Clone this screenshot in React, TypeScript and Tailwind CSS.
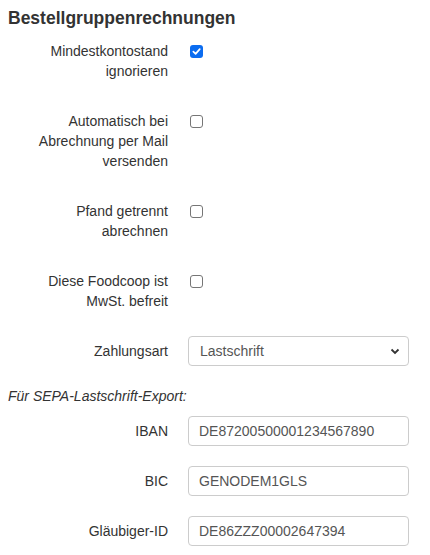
export default function App() {
  const checks = [
    { label: ['Mindestkontostand', 'ignorieren'], checked: true },
    { label: ['Automatisch bei', 'Abrechnung per Mail', 'versenden'], checked: false },
    { label: ['Pfand getrennt', 'abrechnen'], checked: false },
    { label: ['Diese Foodcoop ist', 'MwSt. befreit'], checked: false },
  ];
  const fields = [
    { label: 'IBAN', value: 'DE87200500001234567890' },
    { label: 'BIC', value: 'GENODEM1GLS' },
    { label: 'Gläubiger-ID', value: 'DE86ZZZ00002647394' },
  ];

  return (
    <div className="w-[430px] h-[555px] bg-white text-[#333] font-['Liberation_Sans',Arial,sans-serif] text-[14px] leading-[20px] overflow-hidden">
      <h2 className="pl-2 pt-[7px] text-[17.5px] leading-[22px] font-bold text-[#333]">
        Bestellgruppenrechnungen
      </h2>
      <div className="mt-[12px] flex flex-col">
        {checks.map((c, i) => (
          <div key={i} className="flex items-start mb-[30px]">
            <div className="w-[168px] text-right">
              {c.label.map((l) => (
                <div key={l}>{l}</div>
              ))}
            </div>
            <div className="ml-[22px] pt-[4px]">
              {c.checked ? (
                <span className="flex w-[13px] h-[13px] rounded-[3px] bg-[#0b6cf0] items-center justify-center">
                  <svg width="9" height="9" viewBox="0 0 10 10">
                    <path d="M1.5 5.2 L4 7.6 L8.6 2.4" stroke="white" strokeWidth="1.9" fill="none" strokeLinecap="round" strokeLinejoin="round" />
                  </svg>
                </span>
              ) : (
                <span className="block w-[13px] h-[13px] rounded-[3px] border border-[#767676] bg-white" />
              )}
            </div>
          </div>
        ))}
        <div className="flex items-center -mt-[5px]">
          <div className="w-[168px] text-right">Zahlungsart</div>
          <div className="ml-[20px] w-[221px] h-[30px] rounded-[4px] border border-[#ccc] bg-white flex items-center justify-between pl-[11px] pr-[8px]">
            <span className="text-[#555]">Lastschrift</span>
            <svg width="10" height="7" viewBox="0 0 10 7">
              <path d="M1.5 1.5 L5 5 L8.5 1.5" stroke="#333" strokeWidth="1.8" fill="none" />
            </svg>
          </div>
        </div>
        <div className="pl-2 mt-[20px] italic">Für SEPA-Lastschrift-Export:</div>
        <div className="flex flex-col gap-[20px] mt-[10px]">
          {fields.map((f) => (
            <div key={f.label} className="flex items-center">
              <div className="w-[168px] text-right">{f.label}</div>
              <div className="ml-[20px] w-[221px] h-[30px] rounded-[4px] border border-[#ccc] bg-white flex items-center pl-[10px] text-[#555]">
                {f.value}
              </div>
            </div>
          ))}
        </div>
      </div>
    </div>
  );
}
